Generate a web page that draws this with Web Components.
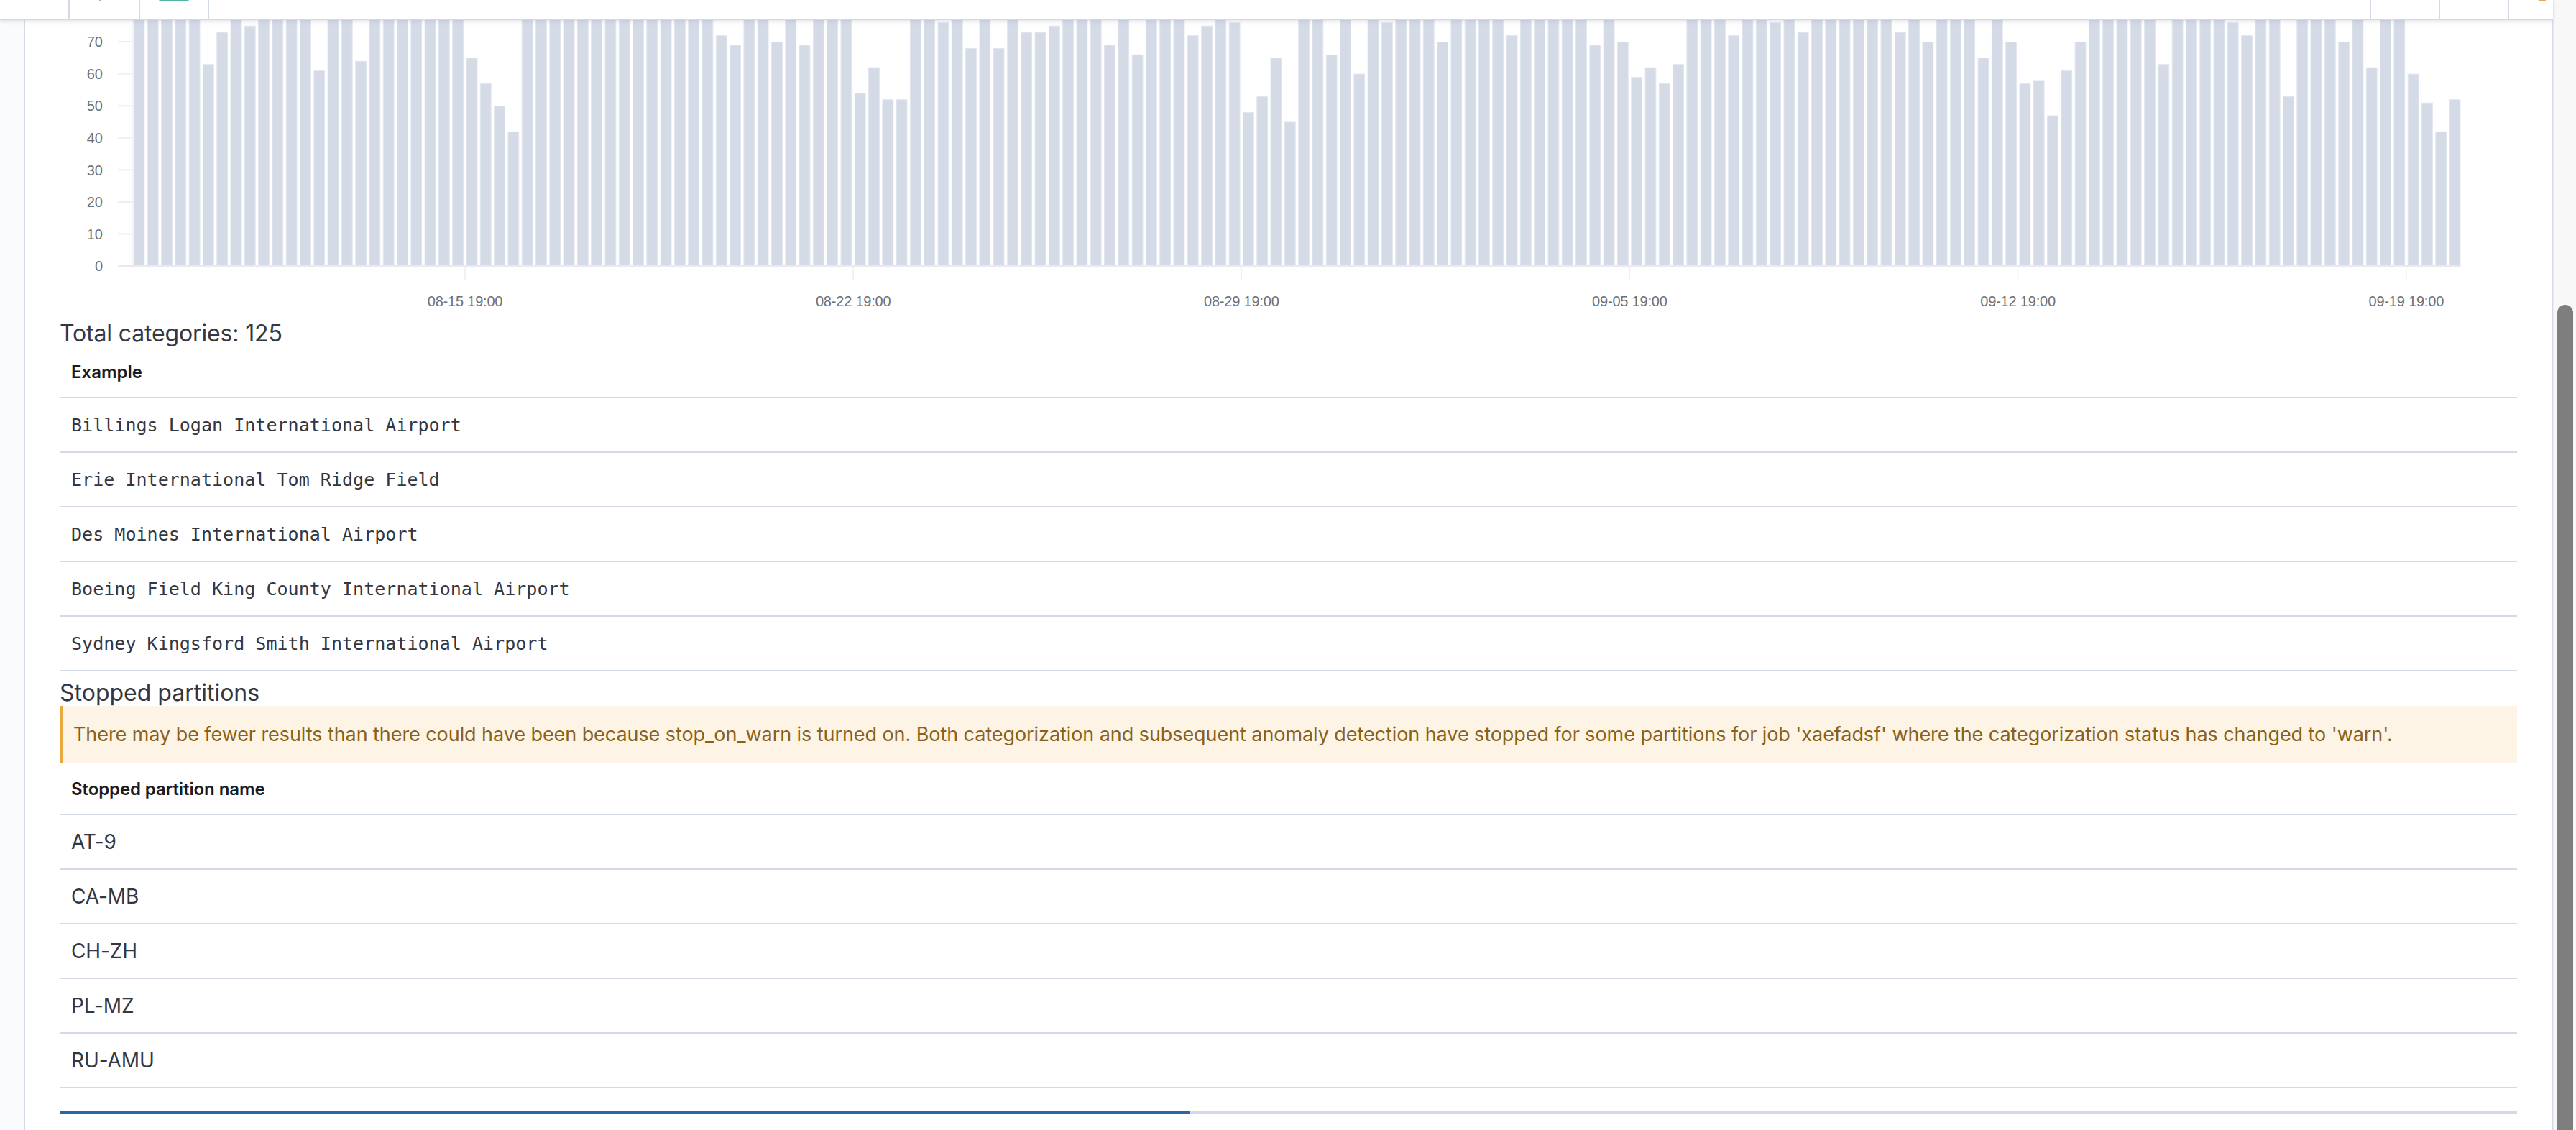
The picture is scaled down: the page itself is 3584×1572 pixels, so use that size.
<!DOCTYPE html>
<html lang="en"><head><meta charset="utf-8"><title>Categorization</title>
<style>html,body{margin:0;padding:0;height:100%;overflow:hidden;background:#fff;font-family:Inter,"Liberation Sans",sans-serif}</style>
</head><body>
<kb-app>
  <kb-topbar slot="top"></kb-topbar>
  <kb-chart></kb-chart>
  <kb-title style="letter-spacing:-.15px">Total categories: 125</kb-title>
  <kb-table heading="Example">
    <kb-row mono>Billings Logan International Airport</kb-row>
    <kb-row mono>Erie International Tom Ridge Field</kb-row>
    <kb-row mono>Des Moines International Airport</kb-row>
    <kb-row mono>Boeing Field King County International Airport</kb-row>
    <kb-row mono>Sydney Kingsford Smith International Airport</kb-row>
  </kb-table>
  <kb-title>Stopped partitions</kb-title>
  <kb-callout>There may be fewer results than there could have been because stop_on_warn is turned on. Both categorization and subsequent anomaly detection have stopped for some partitions for job 'xaefadsf' where the categorization status has changed to 'warn'.</kb-callout>
  <kb-table heading="Stopped partition name" style="letter-spacing:-.1px">
    <kb-row>AT-9</kb-row>
    <kb-row>CA-MB</kb-row>
    <kb-row>CH-ZH</kb-row>
    <kb-row>PL-MZ</kb-row>
    <kb-row>RU-AMU</kb-row>
  </kb-table>
  <kb-progress></kb-progress>
</kb-app>
<script>
function def(name, css, html, init){
  customElements.define(name, class extends HTMLElement{
    constructor(){super();const s=this.attachShadow({mode:'open'});s.innerHTML='<style>'+css+'</style>'+(typeof html==='function'?html(this):html);}
    connectedCallback(){ if(init) init(this); }
  });
}
def('kb-app',`
  :host{display:flex;width:3584px;height:1572px;overflow:hidden}
  .col{flex:1;min-width:0;display:flex;flex-direction:column}
  .body{flex:1;min-height:0;display:flex}
  .gutter{width:33px;flex:none;background:#fafbfd}
  .panel{flex:1;min-width:0;background:#fff;border-left:2px solid #d3dae6;border-right:2px solid #d3dae6;padding:0 48px;overflow:hidden;display:flex;flex-direction:column}
  .track{width:32px;flex:none;background:#f8f8f8;border-left:1px solid #ececec;box-sizing:border-box;padding:424px 4px 0 5px;overflow:hidden}
  .thumb{height:1300px;background:#7e7e7e;border-radius:11px 11px 0 0}
`,`<div class="col"><slot name="top"></slot><div class="body"><div class="gutter"></div><div class="panel"><slot></slot></div></div></div><div class="track"><div class="thumb"></div></div>`);

def('kb-topbar',`
  :host{display:flex;height:28px;box-sizing:border-box;background:#fff;border-bottom:2px solid #d3dae6;box-shadow:0 2px 5px rgba(152,162,179,.28);position:relative;z-index:2;overflow:visible}
  .s{box-sizing:border-box;flex:none;border-right:2px solid #d3dae6;height:26px;display:flex;justify-content:center;overflow:hidden}
  .fill{flex:1}
  .r{border-right:none;border-left:2px solid #d3dae6}
  .g{width:42px;height:10px;margin-top:-8px;background:#54b3a3;border-radius:3px}
  .t{width:2px;height:1px;background:#a9adb5;margin-left:-12px}
  .o{width:18px;height:18px;margin-top:-16px;margin-left:30px;background:#e9a25c;border-radius:50%}
`,`<div class="s" style="width:97px"></div><div class="s" style="width:98px"><div class="t"></div></div><div class="s" style="width:96px"><div class="g"></div></div><div class="fill"></div><div class="s r" style="width:96px"></div><div class="s r" style="width:96px"></div><div class="s r" style="width:63px"><div class="o"></div></div>`);

const F=99;
const VALS=[F,F,F,F,F,63,73,F,75,F,F,F,F,61,F,F,64,F,F,F,F,F,F,F,65,57,50,42,
F,F,F,F,F,F,F,F,F,F,F,F,F,F,72,69,F,F,70,F,69,F,F,F,54,62,52,52,F,F,76,F,68,F,68,F,73,73,75,F,F,F,69,F,66,F,F,F,72,75,F,76,48,53,65,45,
F,F,66,F,60,F,76,F,F,F,70,F,F,F,F,72,F,F,F,F,F,69,F,70,59,62,57,63,F,F,F,72,F,F,76,F,73,F,F,F,F,F,F,73,F,70,
F,F,F,65,F,70,57,58,47,61,70,F,F,F,F,F,63,F,F,F,F,76,72,F,F,53,F,F,F,70,F,62,F,F,60,51,42,52];
def('kb-chart',`
  :host{display:block;height:406px;flex:none}
  svg{display:block;overflow:hidden}
  text{font-family:"Liberation Sans",Arial,sans-serif;font-size:20px;fill:#6f7076}
  .x{letter-spacing:-.2px}
`,()=>{
  let o='<svg xmlns="http://www.w3.org/2000/svg" width="3419" height="406" viewBox="83 28 3419 406">';
  VALS.forEach((v,i)=>{const x=185.5+i*19.294,top=370-v*4.457;o+=`<rect x="${(x+.5).toFixed(2)}" y="${(top+.5).toFixed(2)}" width="14.8" height="${(369.1-top).toFixed(2)}" fill="#d4dae6" stroke="#e2e6ee" stroke-width="1"/>`;});
  o+='<rect x="183" y="28" width="1.5" height="343" fill="#eeeeee"/><rect x="164" y="369" width="3260" height="2" fill="#e9eaee"/>';
  for(let k=0;k<=7;k++){const y=370-k*44.57;if(k>0)o+=`<rect x="164" y="${(y-1).toFixed(1)}" width="20" height="2" fill="#eeeeee"/>`;o+=`<text x="143" y="${(y+7.2).toFixed(1)}" text-anchor="end">${k*10}</text>`;}
  ['08-15 19:00','08-22 19:00','08-29 19:00','09-05 19:00','09-12 19:00','09-19 19:00'].forEach((t,k)=>{const x=647+k*540.15;o+=`<rect x="${(x-.75).toFixed(2)}" y="370" width="1.5" height="20" fill="#eeeeee"/><text class="x" x="${x.toFixed(1)}" y="426" text-anchor="middle">${t}</text>`;});
  return o+'</svg>';
});
def('kb-title',`
  :host{display:block;flex:none;box-sizing:border-box;height:48px;padding-top:12px;font:400 32px/36px Inter,"Liberation Sans",sans-serif;color:#343741;white-space:nowrap}
`,`<slot></slot>`);
def('kb-table',`
  :host{display:block;flex:none}
  .h{box-sizing:border-box;height:72px;border-bottom:2px solid #d3dae6;padding:1px 16px 0;display:flex;align-items:center;font:600 24px/36px Inter,"Liberation Sans",sans-serif;color:#1a1c21}
`,el=>`<div class="h" part="head">${el.getAttribute('heading')}</div><slot></slot>`);
def('kb-row',`
  :host{display:flex;align-items:center;box-sizing:border-box;height:76px;border-bottom:2px solid #d3dae6;padding:0 16px;font:400 28px/42px Inter,"Liberation Sans",sans-serif;color:#343741;white-space:pre}
  :host([mono]){font:400 25.05px/38px "DejaVu Sans Mono","Liberation Mono",monospace;padding-top:2px;letter-spacing:0}
`,`<slot></slot>`);
def('kb-callout',`
  :host{display:block;flex:none;box-sizing:border-box;height:80px;padding:19px 16px 19px 15px;background:#fdf4e6;border-left:4px solid #e9a93f;font:400 27px/42px Inter,"Liberation Sans",sans-serif;letter-spacing:-.07px;color:#8a6118;white-space:nowrap}
`,`<slot></slot>`);
def('kb-progress',`
  :host{display:flex;flex:none;height:4px;margin-top:32px;background:#d3dae6}
  .b{width:1573px;background:#2a66b0}
`,`<div class="b"></div>`);
</script>
</body></html>
